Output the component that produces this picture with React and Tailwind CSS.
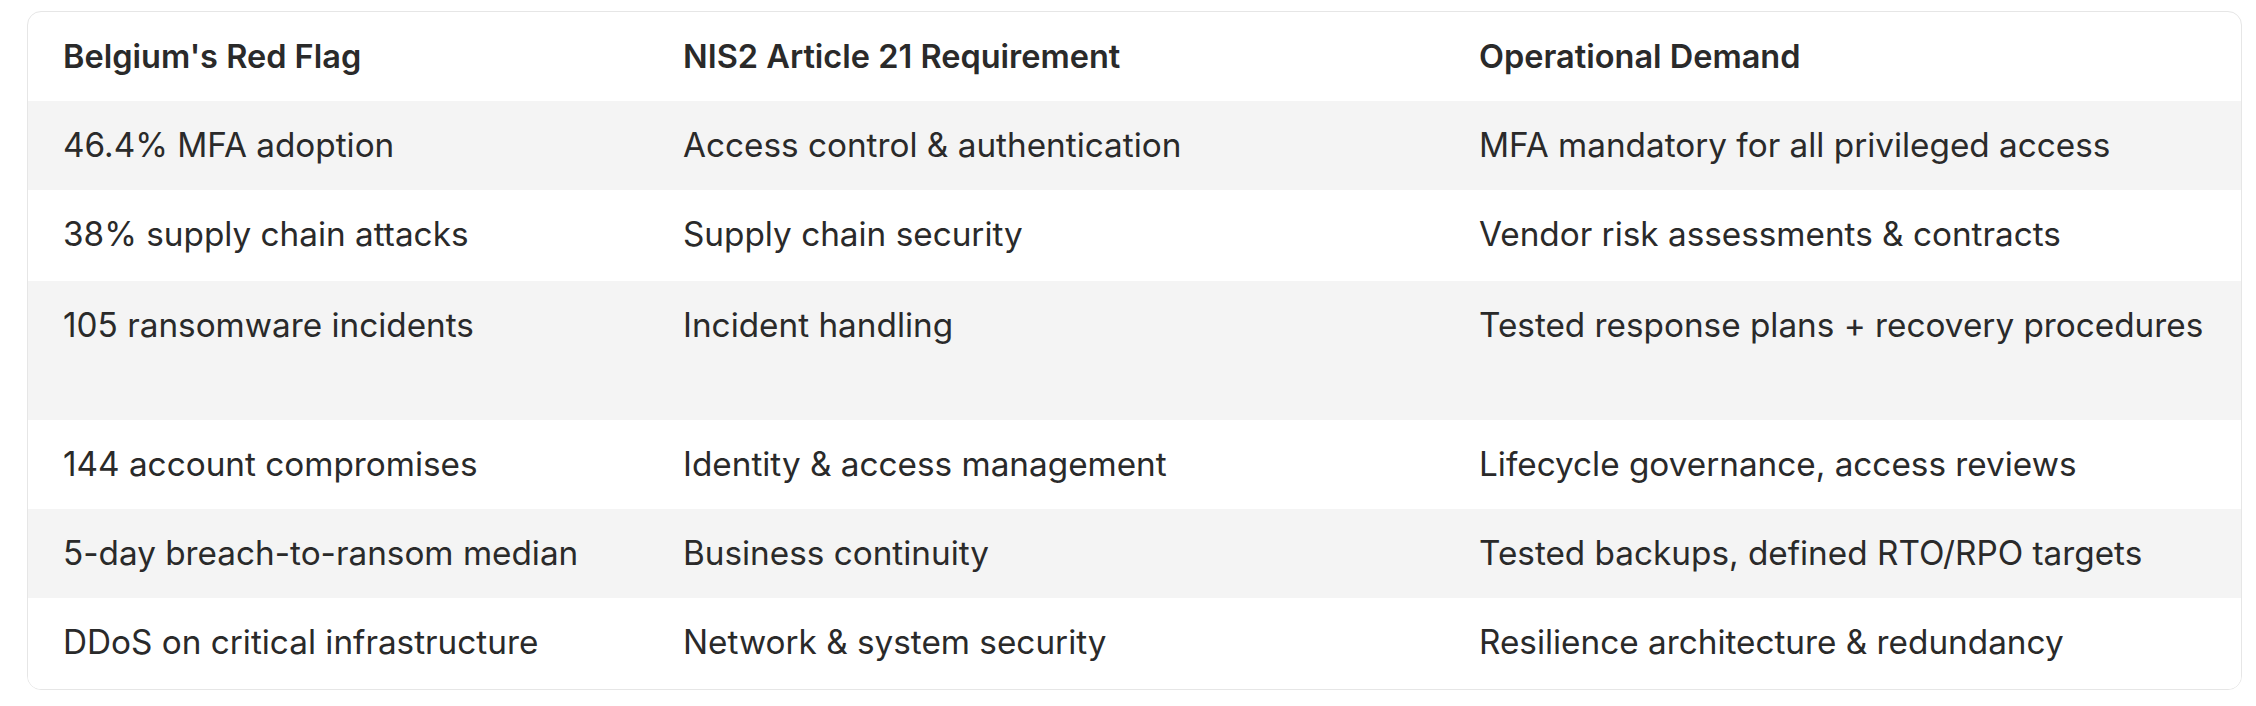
const rows = [
  ["46.4% MFA adoption", "Access control & authentication", "MFA mandatory for all privileged access", "h-[88px]"],
  ["38% supply chain attacks", "Supply chain security", "Vendor risk assessments & contracts", "h-[91px]"],
  ["105 ransomware incidents", "Incident handling", "Tested response plans + recovery procedures", "h-[139px]"],
  ["144 account compromises", "Identity & access management", "Lifecycle governance, access reviews", "h-[89px]"],
  ["5-day breach-to-ransom median", "Business continuity", "Tested backups, defined RTO/RPO targets", "h-[89px]"],
  ["DDoS on critical infrastructure", "Network & system security", "Resilience architecture & redundancy", "h-[91px]"],
];

function App() {
  return (
    <div
      className="min-h-screen bg-white pt-[11px] pl-[27px]"
      style={{ fontFamily: "Inter, 'Noto Sans', sans-serif" }}
    >
      <div className="w-[2215px] border border-[#e6e6e6] rounded-[14px] overflow-hidden">
        <table className="w-full table-fixed border-collapse text-[33.3px] leading-[53px] text-[#2a2a2a]">
          <colgroup>
            <col className="w-[620px]" />
            <col className="w-[796px]" />
            <col />
          </colgroup>
          <thead>
            <tr className="h-[89px]">
              <th className="text-left text-[32.5px] font-semibold px-[35px] pt-[18px] pb-[18px] align-top">
                Belgium's Red Flag
              </th>
              <th className="text-left text-[32.5px] font-semibold px-[35px] pt-[18px] pb-[18px] align-top">
                NIS2 Article 21 Requirement
              </th>
              <th className="text-left text-[32.5px] font-semibold px-[35px] pt-[18px] pb-[18px] align-top">
                Operational Demand
              </th>
            </tr>
          </thead>
          <tbody>
            {rows.map((row, i) => (
              <tr key={i} className={(i % 2 === 0 ? "bg-[#f4f4f4] " : "bg-white ") + row[3]}>
                <td className="px-[35px] py-[18px] align-top">{row[0]}</td>
                <td className="px-[35px] py-[18px] align-top">{row[1]}</td>
                <td className="px-[35px] py-[18px] align-top whitespace-nowrap">{row[2]}</td>
              </tr>
            ))}
          </tbody>
        </table>
      </div>
    </div>
  );
}

export default App;
